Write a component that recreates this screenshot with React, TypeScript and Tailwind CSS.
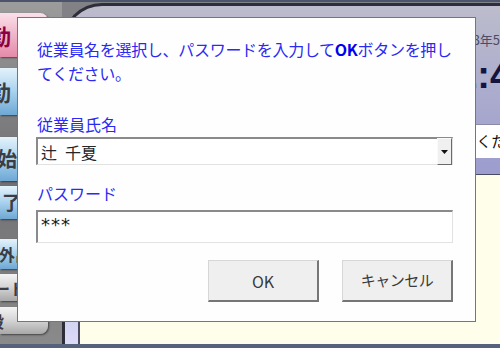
const jp = { fontFamily: '"Noto Sans CJK JP", "Noto Sans", sans-serif' };

function SideButton({
  label,
  tone,
  className,
  textClass,
}: {
  label: string;
  tone: "pink" | "blue" | "gray";
  className: string;
  textClass: string;
}) {
  const bg =
    tone === "pink"
      ? "bg-gradient-to-b from-[#fbe0ea] via-[#f0b4c8] to-[#e48aa8]"
      : tone === "blue"
        ? "bg-gradient-to-b from-[#e4f2fb] via-[#a8d2ee] to-[#6ea8d4]"
        : "bg-gradient-to-b from-[#f4f4f4] via-[#d4d4d4] to-[#a8a8a8]";
  return (
    <div
      className={`w-[48px] shrink-0 rounded-r-[8px] flex items-center overflow-hidden shadow-[1px_1px_2px_rgba(0,0,0,0.5)] ${bg} ${className}`}
    >
      <span className={`shrink-0 whitespace-nowrap font-bold ${textClass}`}>{label}</span>
    </div>
  );
}

function Dialog() {
  return (
    <div
      className="absolute left-[17px] top-[15px] w-[459px] h-[305px] bg-[#fefefe] border border-[#767676] pt-[19px] pl-[18px] pr-[22px] flex flex-col"
      style={jp}
    >
      <p className="pl-[1px] text-[16px] leading-[24px] tracking-[-0.3px] text-[#2a2af4] whitespace-nowrap">
        従業員名を選択し、パスワードを入力して<b className="font-bold text-[#0000f0]">OK</b>ボタンを押し
        <br />
        てください。
      </p>

      <label className="mt-[29px] pl-[1px] text-[16px] leading-[20px] text-[#2a2af4]">従業員氏名</label>
      <div className="mt-[3px] h-[28px] flex border-t-2 border-l-2 border-[#8a8a8a] border-r border-b border-r-[#e2e2e2] border-b-[#e2e2e2] bg-white">
        <span className="flex-1 pl-[3px] text-[16px] leading-[26px] text-[#262626]">辻{"\u2002"}千夏</span>
        <div className="w-[15px] my-[-1px] flex items-center justify-center bg-[#f0f0f0] border-t border-l border-[#fafafa] border-r border-b border-r-[#6a6a6a] border-b-[#6a6a6a]">
          <svg width="7" height="4" viewBox="0 0 7 4">
            <path d="M0 0h7L3.5 4z" fill="#111" />
          </svg>
        </div>
      </div>

      <label className="mt-[18px] pl-[1px] text-[16px] leading-[20px] text-[#2a2af4]">パスワード</label>
      <div className="mt-[7px] h-[33px] border-t-2 border-l-2 border-[#8a8a8a] border-r border-b border-r-[#e2e2e2] border-b-[#e2e2e2] bg-white pl-[3px]">
        <span
          className="text-[18px] leading-[22px] tracking-[1px] text-[#1a1a1a]"
          style={{ fontFamily: '"DejaVu Sans", sans-serif' }}
        >
          ***
        </span>
      </div>

      <div className="mt-[17px] flex justify-end gap-[23px]">
        <button className="w-[111px] h-[42px] bg-[#efefef] border-t border-l border-[#d6d6d6] border-r-2 border-b-2 border-r-[#767676] border-b-[#767676] text-[16px] text-[#3a3a3a]">
          OK
        </button>
        <button className="w-[111px] h-[42px] bg-[#efefef] border-t border-l border-[#d6d6d6] border-r-2 border-b-2 border-r-[#767676] border-b-[#767676] text-[15px] tracking-[-0.5px] text-[#3a3a3a]">
          キャンセル
        </button>
      </div>
    </div>
  );
}

export default function App() {
  return (
    <div className="relative w-[500px] h-[348px] overflow-hidden flex bg-[#828286] border-t-2 border-b-[4px] border-t-[#4c546c] border-b-[#56627c]">
      {/* left button column */}
      <div className="w-[62px] shrink-0 flex flex-col bg-gradient-to-b from-[#9c9c9c] via-[#707074] to-[#8a8a8a]" style={jp}>
        <SideButton label="勤" tone="pink" className="mt-[11px] h-[44px]" textClass="-ml-[11px] text-[22px] text-[#8a0040]" />
        <SideButton label="勤" tone="blue" className="mt-[11px] h-[47px]" textClass="-ml-[11px] text-[22px] text-[#3c3c44]" />
        <SideButton label="始" tone="blue" className="mt-[22px] h-[44px]" textClass="-ml-[3px] text-[20px] text-[#3c3c44]" />
        <SideButton label="了" tone="blue" className="mt-[5px] h-[33px]" textClass="ml-[2px] text-[19px] text-[#3c3c44]" />
        <SideButton label="外出" tone="blue" className="mt-[20px] h-[30px]" textClass="-ml-[1px] text-[16px] text-[#3c3c44]" />
        <SideButton label="ード" tone="gray" className="mt-[5px] h-[27px]" textClass="-ml-[6px] text-[16px] text-[#3c3c44]" />
        <SideButton label="設" tone="gray" className="mt-[6px] h-[27px]" textClass="-ml-[12px] text-[16px] text-[#3c3c44]" />
      </div>

      {/* main panel */}
      <div className="flex-1 min-w-0 mt-[1px] flex flex-col border-t-[3px] border-l-[3px] border-[#2e2e3a] rounded-tl-[40px] bg-gradient-to-b from-[#bcbccc] via-[#9c9cce] to-[#dcdcf8]">
        <div className="mt-[25px] ml-[386px] whitespace-nowrap text-[13px] leading-[18px] text-[#4c4c66]" style={jp}>
          2013年5月22日
        </div>
        <div
          className="mt-[7px] ml-[370px] whitespace-nowrap text-[38px] leading-[38px] font-bold text-[#141440]"
          style={{ fontFamily: '"Liberation Sans", Arial, sans-serif' }}
        >
          12:45
        </div>
        <div className="mt-[30px] ml-[15px] h-[34px] bg-white border-t border-[#8a8aa8] pl-[382px] pt-[4px] whitespace-nowrap text-[15px] leading-[24px] text-[#111]" style={jp}>
          てください
        </div>
        <div className="mt-[16px] ml-[13px] flex-1 bg-[#fefeea] border-l-2 border-t border-[#4a4a60]" />
      </div>

      <Dialog />
    </div>
  );
}
